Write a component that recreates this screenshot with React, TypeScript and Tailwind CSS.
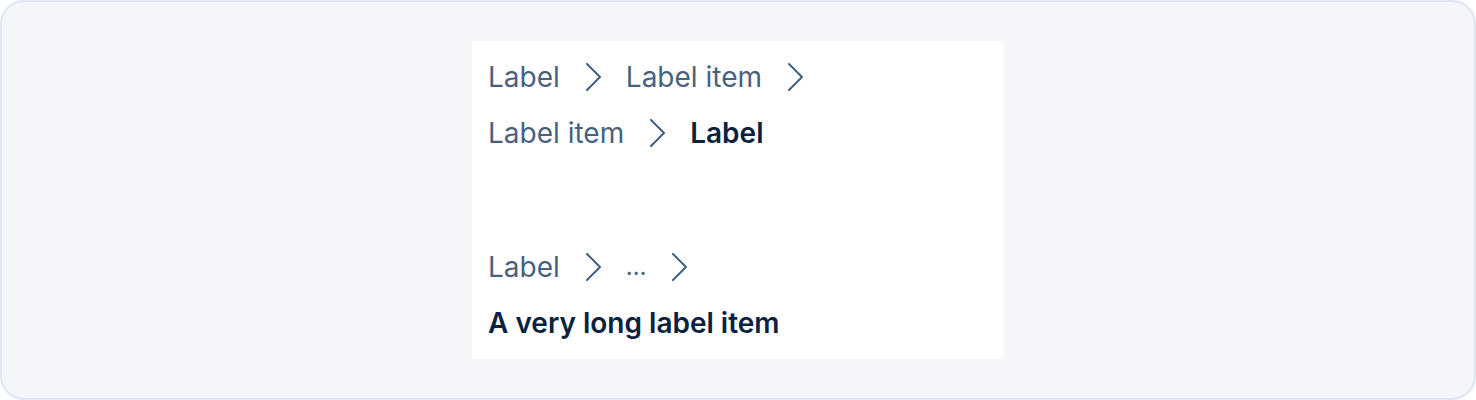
import React from 'react';

type Crumb = { label: string; current?: boolean; collapsed?: boolean };

const Chevron = () => (
  <svg width="16" height="28" viewBox="0 0 16 28" fill="none" className="shrink-0">
    <polyline points="2,1 15,14 2,27" stroke="#42607f" strokeWidth="2" strokeLinecap="round" strokeLinejoin="round" />
  </svg>
);

const Breadcrumb = ({ items }: { items: Crumb[] }) => (
  <nav className="w-[480px]">
    <ol className="flex flex-wrap items-center gap-y-4">
      {items.map((item, i) => (
        <li key={i} className="flex h-10 items-center">
          {item.current ? (
            <span className="text-[#0b2140] font-semibold">{item.label}</span>
          ) : (
            <>
              {/* collapsed items render as a narrow ellipsis */}
              <a className={item.collapsed ? 'text-[#48627e] w-[20px] text-[24px]' : 'text-[#48627e]'}>{item.label}</a>
              <span className="mx-[25px] flex items-center"><Chevron /></span>
            </>
          )}
        </li>
      ))}
    </ol>
  </nav>
);

export default function App() {
  return (
    <div
      className="w-[1476px] h-[400px] bg-[#f5f6f9] border-2 border-[#dde6f2] rounded-[24px] flex items-center justify-center"
      style={{ fontFamily: 'Inter, "Noto Sans", sans-serif' }}
    >
      <div className="bg-white w-[532px] px-4 py-4 flex flex-col gap-[94px] text-[28px] leading-10">
        <Breadcrumb
          items={[
            { label: 'Label' },
            { label: 'Label item' },
            { label: 'Label item' },
            { label: 'Label', current: true },
          ]}
        />
        <Breadcrumb
          items={[
            { label: 'Label' },
            { label: '…', collapsed: true },
            { label: 'A very long label item', current: true },
          ]}
        />
      </div>
    </div>
  );
}
